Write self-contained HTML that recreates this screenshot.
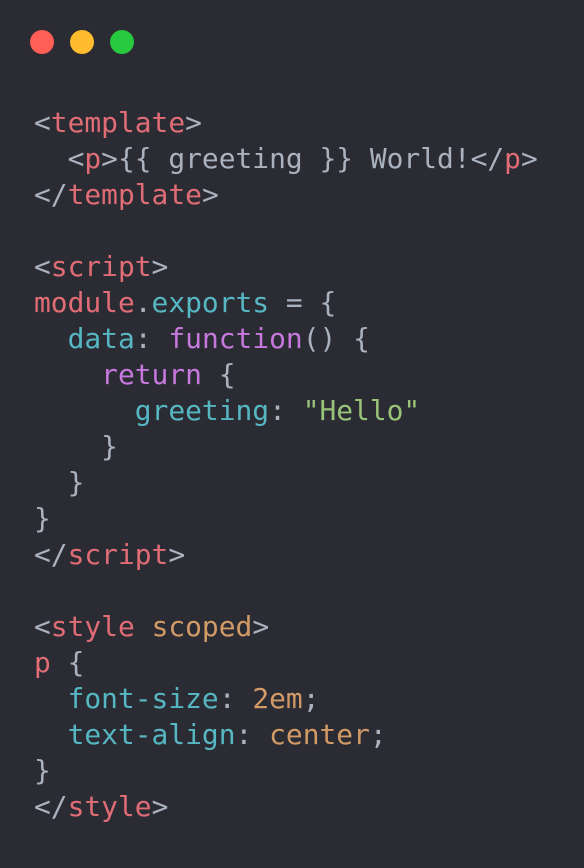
<!DOCTYPE html>
<html><head><style>
html,body{margin:0;padding:0;width:584px;height:868px;background:#2a2b33;overflow:hidden}
.d{position:absolute;top:30px;width:24px;height:24px;border-radius:50%}
pre{position:absolute;left:34px;top:105px;margin:0;font-family:"DejaVu Sans Mono","Liberation Mono",monospace;font-size:27.9px;line-height:36px;color:#abb2bf}
.r{color:#e06c75}.c{color:#56b6c2}.p{color:#c678dd}.g{color:#98c379}.o{color:#d19a66}
</style></head><body>
<div class="d" style="left:30px;background:#ff5f56"></div>
<div class="d" style="left:70px;background:#ffbd2e"></div>
<div class="d" style="left:110px;background:#27c93f"></div>
<pre>&lt;<span class="r">template</span>&gt;
  &lt;<span class="r">p</span>&gt;{{ greeting }} World!&lt;/<span class="r">p</span>&gt;
&lt;/<span class="r">template</span>&gt;

&lt;<span class="r">script</span>&gt;
<span class="r">module</span>.<span class="c">exports</span> = {
  <span class="c">data</span>: <span class="p">function</span>() {
    <span class="p">return</span> {
      <span class="c">greeting</span>: <span class="g">"Hello"</span>
    }
  }
}
&lt;/<span class="r">script</span>&gt;

&lt;<span class="r">style</span> <span class="o">scoped</span>&gt;
<span class="r">p</span> {
  <span class="c">font-size</span>: <span class="o">2em</span>;
  <span class="c">text-align</span>: <span class="o">center</span>;
}
&lt;/<span class="r">style</span>&gt;</pre>
</body></html>
